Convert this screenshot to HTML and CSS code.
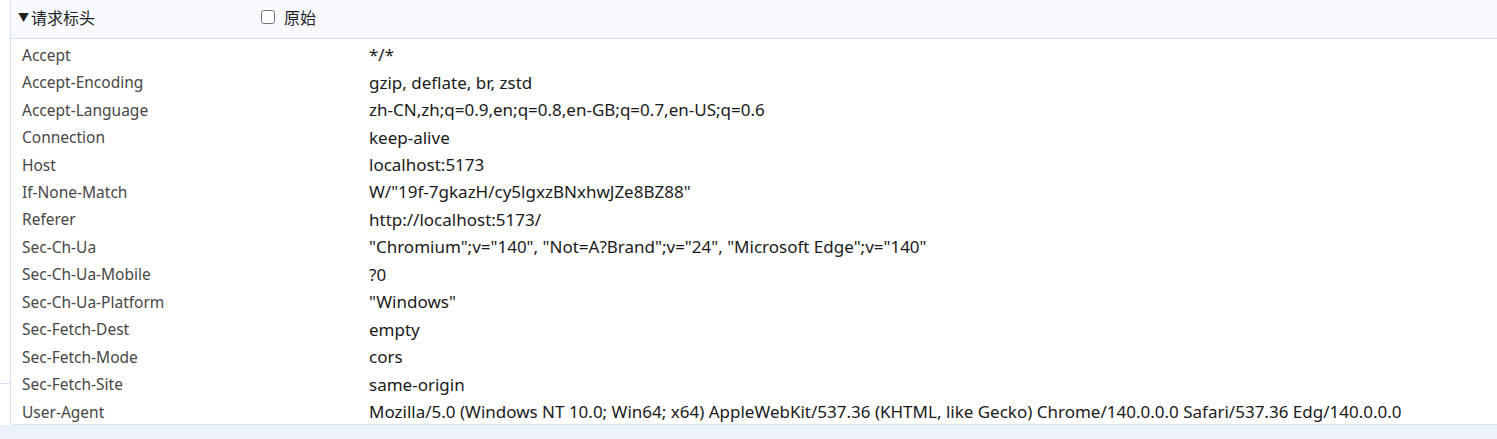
FILE: index.html
```html
<!DOCTYPE html>
<html lang="zh-CN">
<head>
<meta charset="utf-8">
<link rel="stylesheet" href="styles.css">
</head>
<body>
<div class="page">
  <div class="gutter">
    <div class="gutter-line"></div>
    <div class="gutter-mark">⁝</div>
  </div>
  <div class="panel">
    <div class="header">
      <div class="title"><span class="tri">▼</span>请求标头</div>
      <label class="raw"><input type="checkbox" class="cb"><span>原始</span></label>
    </div>
    <div class="rows">
      <div class="row"><div class="k">Accept</div><div class="v">*/*</div></div>
      <div class="row"><div class="k">Accept-Encoding</div><div class="v">gzip, deflate, br, zstd</div></div>
      <div class="row"><div class="k">Accept-Language</div><div class="v">zh-CN,zh;q=0.9,en;q=0.8,en-GB;q=0.7,en-US;q=0.6</div></div>
      <div class="row"><div class="k">Connection</div><div class="v">keep-alive</div></div>
      <div class="row"><div class="k">Host</div><div class="v">localhost:5173</div></div>
      <div class="row"><div class="k">If-None-Match</div><div class="v">W/"19f-7gkazH/cy5lgxzBNxhwJZe8BZ88"</div></div>
      <div class="row"><div class="k">Referer</div><div class="v">http://localhost:5173/</div></div>
      <div class="row"><div class="k">Sec-Ch-Ua</div><div class="v">"Chromium";v="140", "Not=A?Brand";v="24", "Microsoft Edge";v="140"</div></div>
      <div class="row"><div class="k">Sec-Ch-Ua-Mobile</div><div class="v">?0</div></div>
      <div class="row"><div class="k">Sec-Ch-Ua-Platform</div><div class="v">"Windows"</div></div>
      <div class="row"><div class="k">Sec-Fetch-Dest</div><div class="v">empty</div></div>
      <div class="row"><div class="k">Sec-Fetch-Mode</div><div class="v">cors</div></div>
      <div class="row"><div class="k">Sec-Fetch-Site</div><div class="v">same-origin</div></div>
      <div class="row"><div class="k">User-Agent</div><div class="v">Mozilla/5.0 (Windows NT 10.0; Win64; x64) AppleWebKit/537.36 (KHTML, like Gecko) Chrome/140.0.0.0 Safari/537.36 Edg/140.0.0.0</div></div>
    </div>
  </div>
</div>
<div class="footer"></div>
</body>
</html>
```
FILE: styles.css
```css
html, body {
  margin: 0;
  padding: 0;
  background: #ffffff;
  font-family: "Noto Sans", "Noto Sans CJK SC", sans-serif;
  overflow: hidden;
}
.page {
  display: flex;
  height: 425px;
  overflow: hidden;
}
.gutter {
  width: 10px;
  flex: none;
  border-right: 1px solid #d6e2fa;
}
.gutter-line {
  margin-top: 383px;
  height: 1px;
  background: #d6e2fa;
}
.gutter-mark {
  font-size: 12px;
  line-height: 12px;
  color: #444;
  margin-top: 11px;
  margin-left: -3px;
}
.panel {
  flex: 1;
  display: flex;
  flex-direction: column;
}
.header {
  flex: none;
  background: #f8faff;
  border-bottom: 1px solid #d6e2fa;
  display: flex;
  align-items: center;
  box-sizing: border-box;
  height: 39px;
  padding-bottom: 4px;
}
.title {
  font-family: "Noto Sans CJK SC", sans-serif;
  font-size: 16px;
  color: #1f1f1f;
  width: 243px;
  padding-left: 7px;
  display: flex;
  align-items: center;
}
.tri {
  font-size: 11px;
  margin-right: 2px;
}
.raw {
  display: flex;
  align-items: center;
  font-family: "Noto Sans CJK SC", sans-serif;
  font-size: 16px;
  color: #1f1f1f;
}
.cb {
  width: 14px;
  height: 14px;
  margin: 0 9px 0 0;
}
.rows {
  padding-top: 2px;
  flex: 1;
  min-height: 0;
  overflow: hidden;
  border-bottom: 1px solid #d6e2fa;
}
.row {
  height: 27.46px;
  display: flex;
  align-items: center;
}
.k {
  width: 347px;
  padding-left: 11px;
  flex: none;
  font-size: 15.5px;
  color: #474747;
}
.v {
  font-size: 17px;
  color: #1a1a1a;
  white-space: nowrap;
}
.footer {
  height: 14px;
  background: #ebf0f9;
}
```
